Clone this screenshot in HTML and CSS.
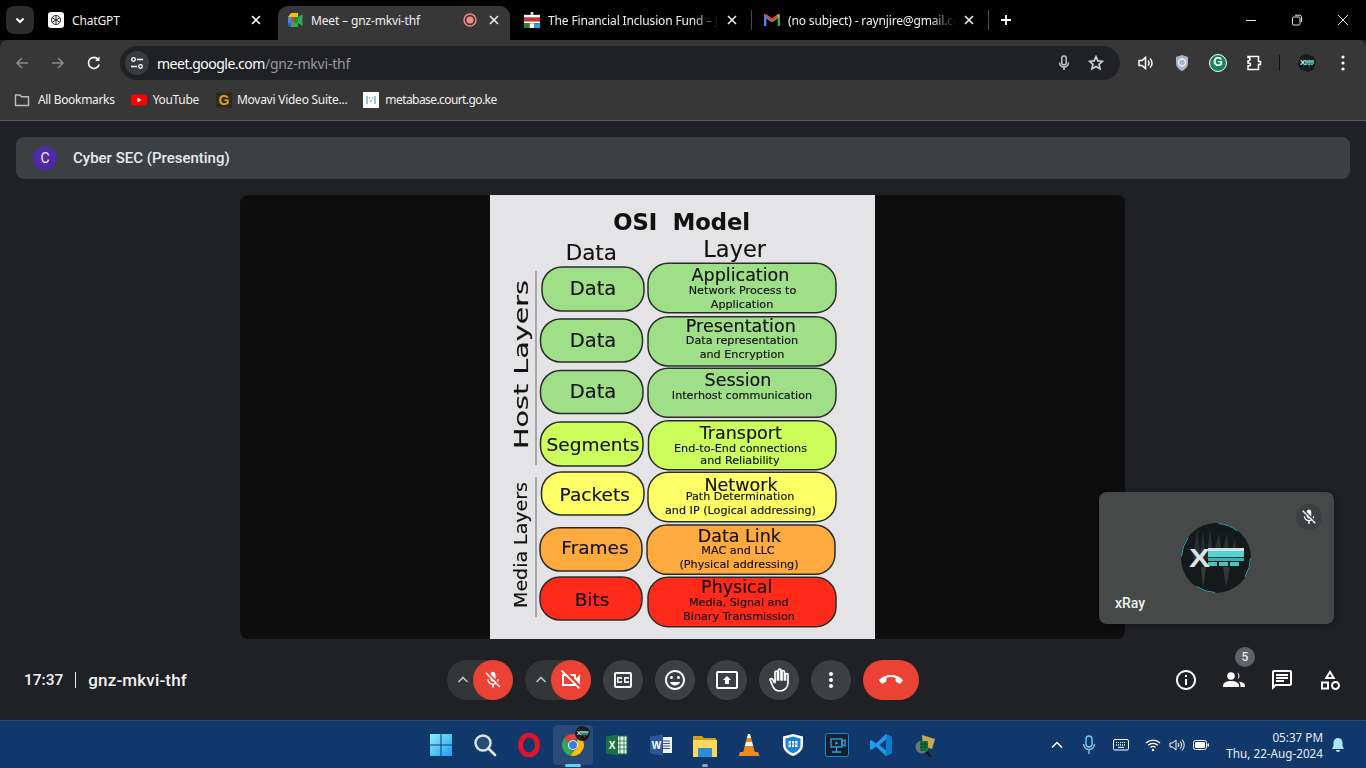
FILE: index.html
```html
<!DOCTYPE html>
<html lang="en">
<head>
<meta charset="utf-8">
<title>Meet – gnz-mkvi-thf</title>
<link rel="stylesheet" href="styles.css">
</head>
<body>
<svg class="defs" aria-hidden="true">
  <symbol id="xray" viewBox="0 0 70 70">
    <clipPath id="xclip"><circle cx="35" cy="35" r="35"/></clipPath>
    <g clip-path="url(#xclip)">
      <rect width="70" height="70" fill="#15191a"/>
      <path d="M16 6l3 26 3-24 3 28 4-30 3 26 6-22 3 20 5-20 3 24 5-18 2 20H12z" fill="#263233"/>
      <path d="M20 44l2 22 3-22zM42 44l3 20 4-20z" fill="#33393a"/>
      <rect x="27" y="25" width="36" height="3" fill="#d8e0e0"/>
      <rect x="27" y="28" width="36" height="6" fill="#4fd4d0"/>
      <rect x="27" y="35" width="36" height="3" fill="#2fb6b2"/>
      <rect x="27" y="39" width="9" height="4" fill="#46c4c0"/>
      <rect x="38" y="39" width="9" height="4" fill="#46c4c0"/>
      <rect x="49" y="39" width="9" height="4" fill="#46c4c0"/>
      <text x="8" y="44" class="x-letter" textLength="21" lengthAdjust="spacingAndGlyphs">X</text>
    </g>
    <circle cx="35" cy="35" r="34.5" fill="none" stroke="#2aa6a6" stroke-width="1" stroke-dasharray="20 35"/>
  </symbol>
  <symbol id="micoff" viewBox="0 0 24 24"><path d="M19 11h-1.7c0 .74-.16 1.43-.43 2.05l1.23 1.23c.56-.98.9-2.09.9-3.28zm-4.02.17c0-.06.02-.11.02-.17V5c0-1.66-1.34-3-3-3S9 3.34 9 5v.18l5.98 5.99zM4.27 3L3 4.27l6.01 6.01V11c0 1.66 1.33 3 2.99 3 .22 0 .44-.03.65-.08l1.66 1.66c-.71.33-1.5.52-2.31.52-2.76 0-5.3-2.1-5.3-5.1H5c0 3.41 2.72 6.23 6 6.72V21h2v-3.28c.91-.13 1.77-.45 2.54-.9L19.73 21 21 19.73 4.27 3z"/></symbol>
</svg>

<header class="tabstrip">
  <div class="tabsearch"><svg class="i12" viewBox="0 0 12 12"><path d="M2.500 4.500L6 8l3.500-3.500" class="st-white2"/></svg></div>
  <div class="tab tab-first">
    <span class="fav fav-white"><svg viewBox="0 0 16 16" class="i14"><circle cx="8" cy="8" r="5.200" class="st-dark"/><path d="M8 3v10M3.600 5.500l8.800 5M12.400 5.500l-8.800 5" class="st-dark"/></svg></span>
    <span class="tabtitle">ChatGPT</span>
    <svg class="tabx" viewBox="0 0 10 10"><path d="M1 1l8 8M9 1l-8 8"/></svg>
  </div>
  <div class="tab tab-active">
    <span class="fav">
      <svg viewBox="0 0 16 16" class="i16"><path d="M4 1h7v4H1z" fill="#fbbc04"/><path d="M1 5h3v6H1z" fill="#4285f4"/><path d="M1 11h3v4H3a2 2 0 0 1-2-2z" fill="#1967d2"/><path d="M4 11h7v4H4z" fill="#34a853"/><path d="M4 5h7v6H4z" fill="#1e8e3e"/><path d="M11 5l4.500-3v12L11 11z" fill="#34a853"/><path d="M4 5h3v6H4z" fill="#ea4335" opacity=".8"/></svg>
    </span>
    <span class="tabtitle">Meet – gnz-mkvi-thf</span>
    <svg class="rec" viewBox="0 0 14 14"><circle cx="7" cy="7" r="6" fill="none" stroke="#f28b82" stroke-width="1.400"/><circle cx="7" cy="7" r="3.600" fill="#f28b82"/></svg>
    <svg class="tabx tabx-near" viewBox="0 0 10 10"><path d="M1 1l8 8M9 1l-8 8"/></svg>
  </div>
  <div class="tab tab-third">
    <span class="fav">
      <svg viewBox="0 0 17 17" class="i16"><rect x="7" y="0" width="3" height="3" fill="#ddd"/><rect x="0" y="3" width="17" height="3" fill="#fff"/><rect x="0" y="6" width="17" height="4" fill="#d32f2f"/><rect x="0" y="10" width="17" height="2" fill="#fff"/><rect x="0" y="12" width="6" height="5" fill="#2e7d32"/><rect x="6" y="12" width="5" height="5" fill="#fff"/><rect x="11" y="12" width="6" height="5" fill="#29a0e0"/></svg>
    </span>
    <span class="tabtitle tabtitle-fade">The Financial Inclusion Fund – JI</span>
    <svg class="tabx" viewBox="0 0 10 10"><path d="M1 1l8 8M9 1l-8 8"/></svg>
  </div>
  <div class="tab tab-gmail">
    <span class="fav">
      <svg viewBox="0 0 16 16" class="i16"><path d="M1.200 14V4l6.800 5.200" fill="none" stroke="#4285f4" stroke-width="2.400"/><path d="M14.800 14V4L8 9.200" fill="none" stroke="#34a853" stroke-width="2.400"/><path d="M1.500 3l6.500 5 6.500-5" fill="none" stroke="#ea4335" stroke-width="2.400"/><path d="M13 3.500l2-1.200V6z" fill="#fbbc04"/></svg>
    </span>
    <span class="tabtitle tabtitle-fade">(no subject) - raynjire@gmail.com</span>
    <svg class="tabx" viewBox="0 0 10 10"><path d="M1 1l8 8M9 1l-8 8"/></svg>
  </div>
  <svg class="newtab" viewBox="0 0 12 12"><path d="M6 1v10M1 6h10"/></svg>
  <div class="winctl">
    <svg viewBox="0 0 12 12"><path d="M1 6.500h10"/></svg>
    <svg viewBox="0 0 12 12"><rect x="1.500" y="3" width="7.500" height="8" rx="1.200"/><path d="M4 1.200h4.500a2 2 0 0 1 2 2V8"/></svg>
    <svg viewBox="0 0 12 12"><path d="M1 1l10 10M11 1L1 11"/></svg>
  </div>
</header>

<section class="chrome">
  <div class="toolbar">
    <svg class="nav nav-dim" viewBox="0 0 16 16"><path d="M14 8H3M8 3L3 8l5 5"/></svg>
    <svg class="nav nav-dim" viewBox="0 0 16 16"><path d="M2 8h11M8 3l5 5-5 5"/></svg>
    <svg class="nav" viewBox="0 0 16 16"><path d="M13.200 9.500A5.500 5.500 0 1 1 12 4.200"/><path class="fill-white" d="M13.500 1.500v4.500H9z"/></svg>
    <div class="omnibox">
      <span class="tune"><svg viewBox="0 0 14 14" class="i14"><path d="M7 3.500h6M1 10.500h6" class="st-white12"/><circle cx="3.500" cy="3.500" r="1.800" class="st-white12"/><circle cx="10.500" cy="10.500" r="1.800" class="st-white12"/></svg></span>
      <span class="url">meet.google.com<span class="url-dim">/gnz-mkvi-thf</span></span>
      <svg class="omni-mic" viewBox="0 0 16 16"><rect x="5.800" y="1" width="4.400" height="9" rx="2.200" class="st-soft"/><path d="M3.500 7.500a4.500 4.500 0 0 0 9 0M8 12v3" class="st-soft"/></svg>
      <svg class="omni-star" viewBox="0 0 16 16"><path d="M8 1.600l1.900 4.300 4.600.4-3.500 3 1.100 4.600L8 11.500l-4.100 2.400L5 9.300l-3.500-3 4.600-.4z" class="st-soft15"/></svg>
    </div>
    <div class="extensions">
      <svg class="ext" viewBox="0 0 18 18"><path d="M2 6.500h3l3.500-3v11l-3.500-3H2z" class="st-white15"/><path d="M11 6.500a3.500 3.500 0 0 1 0 5M13 4.500a6 6 0 0 1 0 9" class="st-white15"/></svg>
      <svg class="ext" viewBox="0 0 18 18"><path d="M9 1l6 2v6c0 4-3 6.500-6 8-3-1.500-6-4-6-8V3z" fill="#aab4c8"/><circle cx="9" cy="8.500" r="3.500" fill="none" stroke="#eef1f6" stroke-width="1.400"/></svg>
      <span class="grammarly">G</span>
      <svg class="ext" viewBox="0 0 18 18"><path d="M3 2.500h10.500v5h2v3h-2v5H3v-3.500c1.500 0 2.500-.6 2.500-1.500S4.500 9 3 9V7c1 0 2-.6 2-2S4 3.500 3 3.500z" class="st-white15"/></svg>
      <span class="toolsep"></span>
      <svg class="ext-avatar"><use href="#xray"/></svg>
      <svg class="ext-more" viewBox="0 0 4 16"><circle cx="2" cy="2" r="1.600"/><circle cx="2" cy="8" r="1.600"/><circle cx="2" cy="14" r="1.600"/></svg>
    </div>
  </div>
  <nav class="bookmarks">
    <a class="bm bm-all"><svg class="i16" viewBox="0 0 16 16"><path d="M1.500 3h4.500l1.500 1.800h7v8.700h-13z" class="st-grey"/></svg>All Bookmarks</a>
    <a class="bm bm-yt"><svg class="i16" viewBox="0 0 16 16"><rect y="2.500" width="16" height="11" rx="3" fill="#f00"/><path d="M6.500 5.500l4 2.500-4 2.500z" fill="#fff"/></svg>YouTube</a>
    <a class="bm bm-mv"><span class="mv-g">G</span>Movavi Video Suite...</a>
    <a class="bm bm-meta"><svg class="i16" viewBox="0 0 16 16"><rect width="16" height="16" fill="#fff"/><path d="M3 4h2v8H3zM11 4h2v8h-2zM6 5h1v2H6zM9 5h1v2H9zM7 8h2v2H7z" fill="#9cc4ea"/></svg>metabase.court.go.ke</a>
  </nav>
</section>

<main class="meet">
  <div class="presenter">
    <span class="presenter-avatar">C</span>
    <span class="presenter-name">Cyber SEC (Presenting)</span>
  </div>
  <div class="stage">
    <svg class="slide" viewBox="0 0 385 444" width="385" height="444">
      <rect width="385" height="444" fill="#e4e4e6"/>
      <text class="s-title" x="191.700" y="35">OSI  Model</text>
      <text class="s-head1" x="101.300" y="65">Data</text>
      <text class="s-head2" x="244.700" y="62">Layer</text>
      <rect class="s-rule" x="45" y="76" width="2" height="194"/>
      <rect class="s-rule" x="45" y="282" width="2" height="140"/>
      <text class="s-host" transform="translate(38 169.500) rotate(-90)" textLength="169" lengthAdjust="spacingAndGlyphs">Host Layers</text>
      <text class="s-media" transform="translate(37 350) rotate(-90)" textLength="126" lengthAdjust="spacingAndGlyphs">Media Layers</text>

      <g class="c-green">
        <rect x="52" y="72" width="102" height="44" rx="20"/>
        <rect x="50.500" y="124" width="102" height="43" rx="20"/>
        <rect x="50.500" y="175.500" width="102.500" height="43" rx="20"/>
        <rect x="158" y="68.300" width="188" height="49.400" rx="20"/>
        <rect x="158" y="121.700" width="188" height="49.300" rx="20"/>
        <rect x="158" y="173.300" width="188" height="49" rx="20"/>
      </g>
      <g class="c-lime">
        <rect x="50.500" y="227" width="102.500" height="44" rx="20"/>
        <rect x="158.500" y="225.700" width="187.500" height="49" rx="20"/>
      </g>
      <g class="c-yellow">
        <rect x="51.500" y="277" width="102.500" height="43" rx="20"/>
        <rect x="158" y="277.300" width="188" height="49.400" rx="20"/>
      </g>
      <g class="c-orange">
        <rect x="50" y="332.700" width="102" height="43.300" rx="20"/>
        <rect x="157" y="330" width="188" height="49.300" rx="20"/>
      </g>
      <g class="c-red">
        <rect x="50" y="382" width="102" height="43" rx="20"/>
        <rect x="158" y="382.300" width="188" height="49.400" rx="20"/>
      </g>

      <text class="s-box" x="103" y="100">Data</text>
      <text class="s-box" x="103" y="151.700">Data</text>
      <text class="s-box" x="103" y="202.700">Data</text>
      <text class="s-box s-box-sm" x="103" y="256">Segments</text>
      <text class="s-box s-box-sm" x="104.700" y="306">Packets</text>
      <text class="s-box s-box-sm" x="105" y="359">Frames</text>
      <text class="s-box s-box-sm" x="102" y="410.700">Bits</text>

      <text class="s-layer" x="250.500" y="86">Application</text>
      <text class="s-sub" x="252.500" y="99.300">Network Process to</text>
      <text class="s-sub" x="252" y="113">Application</text>
      <text class="s-layer" x="250.800" y="137.300">Presentation</text>
      <text class="s-sub" x="252" y="148.700">Data representation</text>
      <text class="s-sub" x="252" y="163.300">and Encryption</text>
      <text class="s-layer" x="248" y="191">Session</text>
      <text class="s-sub" x="252" y="203.700">Interhost communication</text>
      <text class="s-layer" x="250.800" y="244">Transport</text>
      <text class="s-sub" x="250.500" y="256.700">End-to-End connections</text>
      <text class="s-sub" x="250" y="269.300">and Reliability</text>
      <text class="s-layer" x="251" y="296">Network</text>
      <text class="s-sub" x="250" y="305">Path Determination</text>
      <text class="s-sub" x="250.500" y="319.300">and IP (Logical addressing)</text>
      <text class="s-layer" x="249.300" y="347.300">Data Link</text>
      <text class="s-sub" x="248" y="359">MAC and LLC</text>
      <text class="s-sub" x="249" y="373.300">(Physical addressing)</text>
      <text class="s-layer" x="246.700" y="398.300">Physical</text>
      <text class="s-sub" x="248.800" y="410.700">Media, Signal and</text>
      <text class="s-sub" x="249" y="424.700">Binary Transmission</text>
    </svg>
    <div class="selftile">
      <svg class="self-avatar"><use href="#xray"/></svg>
      <span class="self-mute"><svg class="i18 fill-white"><use href="#micoff"/></svg></span>
      <span class="self-name">xRay</span>
    </div>
  </div>

  <div class="controls">
    <div class="ctl-left"><span class="clock">17:37</span><span class="ctl-sep"></span><span class="code">gnz-mkvi-thf</span></div>
    <div class="ctl-center">
      <div class="combo"><svg class="caret" viewBox="0 0 12 12"><path d="M1.500 8L6 3.500 10.500 8"/></svg><span class="cbtn red"><svg class="i20 fill-white"><use href="#micoff"/></svg></span></div>
      <div class="combo"><svg class="caret" viewBox="0 0 12 12"><path d="M1.500 8L6 3.500 10.500 8"/></svg><span class="cbtn red"><svg class="i24 fill-white" viewBox="0 0 24 24"><path d="M3.270 2L2 3.270 4.730 6H4c-.55 0-1 .45-1 1v10c0 .55.45 1 1 1h12c.21 0 .39-.08.55-.18L19.730 21 21 19.730 3.270 2zM5 16V8h1.730l8 8H5zm10-8v2.610l6 6V6.500l-4 4V7c0-.55-.45-1-1-1h-5.610l2 2H15z"/></svg></span></div>
      <span class="cbtn"><svg class="i24 fill-white" viewBox="0 0 24 24"><path d="M19 4H5c-1.110 0-2 .9-2 2v12c0 1.100.89 2 2 2h14c1.100 0 2-.9 2-2V6c0-1.100-.9-2-2-2zm0 14H5V6h14v12zM7 15h3c.55 0 1-.45 1-1v-1H9.500v.5h-2v-3h2v.5H11v-1c0-.55-.45-1-1-1H7c-.55 0-1 .45-1 1v4c0 .55.45 1 1 1zm7 0h3c.55 0 1-.45 1-1v-1h-1.500v.5h-2v-3h2v.5H18v-1c0-.55-.45-1-1-1h-3c-.55 0-1 .45-1 1v4c0 .55.45 1 1 1z"/></svg></span>
      <span class="cbtn"><svg class="i24 fill-white" viewBox="0 0 24 24"><path d="M11.990 2C6.470 2 2 6.480 2 12s4.470 10 9.990 10C17.520 22 22 17.520 22 12S17.520 2 11.990 2zM12 20c-4.420 0-8-3.580-8-8s3.580-8 8-8 8 3.580 8 8-3.580 8-8 8zm3.500-9c.83 0 1.500-.67 1.500-1.500S16.330 8 15.500 8 14 8.670 14 9.500s.67 1.500 1.500 1.500zm-7 0c.83 0 1.500-.67 1.500-1.500S9.330 8 8.500 8 7 8.670 7 9.500 7.670 11 8.500 11zm3.500 6.500c2.330 0 4.310-1.460 5.110-3.500H6.890c.8 2.040 2.780 3.500 5.110 3.500z"/></svg></span>
      <span class="cbtn"><svg class="i24 fill-white" viewBox="0 0 24 24"><path d="M21 3H3c-1.110 0-2 .89-2 2v14c0 1.110.89 2 2 2h18c1.110 0 2-.89 2-2V5c0-1.110-.89-2-2-2zm0 16.020H3V4.980h18v14.040zM10 12H8l4-4 4 4h-2v4h-4v-4z"/></svg></span>
      <span class="cbtn"><svg class="i24 hand" viewBox="0 0 24 24"><path d="M13 23c-3.260 0-6.190-1.990-7.400-5.020l-2.400-6.100c-.3-.8.400-1.500 1.100-1.200l.6.200c.56.180 1.020.61 1.240 1.160L7.250 14.500H8V4.250C8 3.560 8.560 3 9.250 3s1.250.56 1.250 1.250V12h1V2.250C11.500 1.560 12.060 1 12.750 1S14 1.560 14 2.250V12h1V3.750c0-.69.56-1.250 1.250-1.250s1.250.56 1.250 1.250V12h1V6.750c0-.69.56-1.250 1.250-1.250S21 6.060 21 6.750V15c0 4.420-3.580 8-8 8z"/></svg></span>
      <span class="cbtn"><svg class="i24 fill-white" viewBox="0 0 24 24"><circle cx="12" cy="6" r="2"/><circle cx="12" cy="12" r="2"/><circle cx="12" cy="18" r="2"/></svg></span>
      <span class="cbtn hangup"><svg class="i24 fill-white" viewBox="0 0 24 24"><path d="M12 9c-1.600 0-3.150.25-4.600.72v3.100c0 .39-.23.74-.56.9-.98.49-1.870 1.120-2.660 1.850-.18.18-.43.28-.7.28-.28 0-.53-.11-.71-.29L.29 13.080c-.18-.17-.29-.42-.29-.7 0-.28.11-.53.29-.71C3.340 8.780 7.460 7 12 7s8.660 1.780 11.710 4.670c.18.18.29.43.29.71 0 .28-.11.53-.29.71l-2.480 2.480c-.18.18-.43.29-.71.29-.27 0-.52-.11-.7-.28-.79-.74-1.690-1.360-2.670-1.850-.33-.16-.56-.5-.56-.9v-3.100C15.150 9.250 13.600 9 12 9z"/></svg></span>
    </div>
    <div class="ctl-right">
      <span class="rbtn"><svg class="i24 fill-white" viewBox="0 0 24 24"><path d="M11 7h2v2h-2zm0 4h2v6h-2zm1-9C6.480 2 2 6.480 2 12s4.480 10 10 10 10-4.480 10-10S17.520 2 12 2zm0 18c-4.410 0-8-3.590-8-8s3.590-8 8-8 8 3.590 8 8-3.590 8-8 8z"/></svg></span>
      <span class="rbtn"><svg class="i24 fill-white" viewBox="0 0 24 24"><circle cx="9" cy="8" r="3.800"/><path d="M1 19v-1.800C1 14.500 5.500 13 9 13s8 1.500 8 4.200V19z"/><path d="M15 4.400a3.800 3.800 0 0 1 0 7.200 5 5 0 0 0 0-7.200zM18.500 19v-1.800c0-1.500-.8-2.700-2.100-3.600 3 .3 6.600 1.600 6.600 3.600V19z"/></svg><span class="badge">5</span></span>
      <span class="rbtn"><svg class="i24 fill-white" viewBox="0 0 24 24"><path d="M20 2H4c-1.100 0-1.990.9-1.990 2L2 22l4-4h14c1.100 0 2-.9 2-2V4c0-1.100-.9-2-2-2zm0 14H5.170L4 17.170V4h16v12zM6 12h8v2H6zm0-3h12v2H6zm0-3h12v2H6z"/></svg></span>
      <span class="rbtn"><svg class="i24 fill-white" viewBox="0 0 24 24"><path d="M12 2l-5.500 9h11L12 2zm0 3.840L13.930 9h-3.870L12 5.840zM17.500 13c-2.490 0-4.500 2.010-4.500 4.500s2.010 4.500 4.500 4.500 4.500-2.010 4.500-4.500-2.010-4.500-4.500-4.500zm0 7c-1.380 0-2.500-1.120-2.500-2.500s1.120-2.500 2.500-2.500 2.500 1.120 2.500 2.500-1.120 2.500-2.500 2.500zM3 21.500h8v-8H3v8zm2-6h4v4H5v-4z"/></svg></span>
    </div>
  </div>
</main>

<footer class="taskbar">
  <div class="task-spacer"></div>
  <div class="apps">
    <span class="app"><svg class="i24" viewBox="0 0 24 24"><defs><linearGradient id="win" x1="0" y1="0" x2="1" y2="1"><stop offset="0" stop-color="#8ff0fb"/><stop offset="1" stop-color="#1c9ef0"/></linearGradient></defs><path fill="url(#win)" d="M1 1h10.500v10.500H1zM12.500 1H23v10.500H12.500zM1 12.500h10.500V23H1zM12.500 12.500H23V23H12.500z"/></svg></span>
    <span class="app"><svg class="i24" viewBox="0 0 24 24"><circle cx="10" cy="10" r="7.500" fill="#274c7a" stroke="#dfe4ea" stroke-width="2.400"/><path d="M15.500 15.500L22 22" stroke="#dfe4ea" stroke-width="2.600" stroke-linecap="round"/></svg></span>
    <span class="app"><svg class="i24" viewBox="0 0 24 24"><ellipse cx="12" cy="12" rx="8.500" ry="10" fill="none" stroke="#e0142b" stroke-width="5"/></svg></span>
    <span class="app app-active">
      <svg class="i24" viewBox="0 0 24 24"><path d="M12 1a11 11 0 0 1 9.500 5.500H12a5.500 5.500 0 0 0-5 3.300L3.700 4.700A11 11 0 0 1 12 1z" fill="#ea4335"/><path d="M3.700 4.700L8.800 13a4.500 4.500 0 0 0 3.600 4.400L9.300 22.600A11 11 0 0 1 3.700 4.700z" fill="#34a853"/><path d="M21.500 6.500A11 11 0 0 1 9.300 22.600l4.200-5.500a5 5 0 0 0 2.900-6L16 6.500z" fill="#fbbc04"/><circle cx="12" cy="12" r="5" fill="#fff"/><circle cx="12" cy="12" r="4" fill="#3b7de8"/></svg>
      <svg class="app-badge"><use href="#xray"/></svg>
      <span class="run run-active"></span>
    </span>
    <span class="app"><svg class="i24" viewBox="0 0 24 24"><path d="M10 3h12v18H10z" fill="#eaf4ee" stroke="#1e7145" stroke-width="1"/><path d="M15 3v18M19 3v18M10 8h12M10 12h12M10 16h12" stroke="#1e7145" stroke-width=".8"/><path d="M1 3.500L13 1.500v21l-12-2z" fill="#1d6f42"/><text class="tb-letter" x="7" y="16">X</text></svg></span>
    <span class="app"><svg class="i24" viewBox="0 0 24 24"><path d="M10 4h13v16H10z" fill="#f2f5fa"/><path d="M13 8h8M13 10.500h8M13 13h8M13 15.500h8" stroke="#2b579a"/><path d="M1 3.500L14 1.500v21l-13-2z" fill="#2b579a"/><text class="tb-letter" x="7.500" y="16">W</text></svg></span>
    <span class="app"><svg class="i24" viewBox="0 0 24 24"><path d="M0 3h9l2 2h12v4H0z" fill="#d29a1a"/><path d="M0 7h24v17H0z" fill="#fbd75b"/><rect x="5" y="15" width="14" height="9" rx="1" fill="#2a8fd8"/></svg><span class="run"></span></span>
    <span class="app"><svg class="i24" viewBox="0 0 24 24"><path d="M11 1h2l1.200 4h-4.400z" fill="#f5f5f5"/><path d="M9.800 5h4.400l1 4H8.800z" fill="#f08a16"/><path d="M8.800 9h6.400l1 4H7.800z" fill="#f5f5f5"/><path d="M7.800 13h8.400l1.600 6H6.200z" fill="#f08a16"/><path d="M3 19h18l1.500 4h-21z" fill="#ef8c1a"/></svg></span>
    <span class="app"><svg class="i24" viewBox="0 0 24 24"><path d="M12 1l10 2.500V12c0 5.500-4.500 9-10 11C6.500 21 2 17.500 2 12V3.500z" fill="#fff"/><path d="M12 3.500l7.500 2V12c0 4-3.300 6.700-7.500 8.300C7.800 18.700 4.500 16 4.500 12V5.500z" fill="#1783d6"/><path d="M7.500 8h9v6h-9z" fill="#fff"/><path d="M7.500 11h9M10.500 8v6M13.500 8v6" stroke="#1783d6"/></svg></span>
    <span class="app"><svg class="i24" viewBox="0 0 24 24"><rect x=".5" y=".5" width="23" height="23" rx="2" fill="#14202e" stroke="#1a86d0"/><rect x="6" y="6" width="11" height="8" fill="none" stroke="#2ea6f0" stroke-width="1.300"/><path d="M10.500 8.200v3.600l3-1.800z" fill="#2ea6f0"/><path d="M17 8.500l3-1.500v6l-3-1.500zM11.500 14v4M7 19h9" stroke="#2ea6f0" stroke-width="1.300" fill="none"/></svg></span>
    <span class="app"><svg class="i24" viewBox="0 0 24 24"><path d="M17 1l6 3v16l-6 3L7 13.500 2.500 17 1 16V8l1.500-1L7 10.500z" fill="#1f9cf0"/><path d="M17 6.500L10.500 12l6.500 5.500z" fill="#0e3a6e"/><path d="M17 1l6 3v16l-6 3z" fill="#0e7ccb"/></svg></span>
    <span class="app"><svg class="i24" viewBox="0 0 24 24"><circle cx="9" cy="14" r="6.500" fill="#6c7479"/><path d="M9 2l13 4-3 10-9-3z" fill="#c9a94d"/><rect x="7" y="8" width="8" height="10" fill="#11823b"/><path d="M9 8v10M12 8v10M7 11h8M7 14h8" stroke="#0b2f1a" stroke-width=".7"/><path d="M13 19l5 5" stroke="#111" stroke-width="2"/></svg></span>
  </div>
  <div class="tray">
    <span class="t32"><svg class="i14" viewBox="0 0 14 14"><path d="M2 9.500L7 4.500l5 5" class="st-white15"/></svg></span>
    <span class="t32"><svg class="i16x" viewBox="0 0 16 20"><rect x="5" y="1" width="6" height="11" rx="3" class="st-blue"/><path d="M2.500 9a5.500 5.500 0 0 0 11 0M8 14.500V19" class="st-blue"/></svg></span>
    <span class="t32 t32-last"><svg class="kbd" viewBox="0 0 16 12"><rect x=".5" y=".5" width="15" height="10.500" rx="1.500" class="st-white1"/><path d="M3 3.500h10M3 5.800h10" class="st-dots"/><path d="M5 8.300h6" class="st-white1"/></svg></span>
    <span class="t24"><svg class="i16" viewBox="0 0 16 14"><path d="M1 5a10 10 0 0 1 14 0M3.200 7.300a7 7 0 0 1 9.600 0M5.400 9.500a4 4 0 0 1 5.200 0" class="st-white12"/><circle cx="8" cy="12" r="1.200" fill="#fff"/></svg></span>
    <span class="t24"><svg class="i16" viewBox="0 0 16 16"><path d="M1 6v4h2.500L7 13V3L3.500 6z" class="st-white1"/><path d="M9 6a3 3 0 0 1 0 4M11 4.200a5.500 5.500 0 0 1 0 7.600M13 2.500a8 8 0 0 1 0 11" class="st-white1"/></svg></span>
    <span class="t24"><svg class="i16" viewBox="0 0 16 12"><rect x=".5" y="1.500" width="13" height="9" rx="2" class="st-white1"/><rect x="2" y="3" width="10" height="6" rx="1" fill="#fff"/><rect x="14.500" y="4.500" width="1.500" height="3" fill="#fff"/></svg></span>
    <div class="datetime"><span>05:37 PM</span><span>Thu, 22-Aug-2024</span></div>
    <span class="t24"><svg class="i16" viewBox="0 0 16 16"><path d="M8 1a4.500 4.500 0 0 1 4.500 4.500V9L14 12H2l1.500-3V5.500A4.500 4.500 0 0 1 8 1z" fill="#a6e8fb"/><path d="M6 13h4a2 2 0 0 1-4 0z" fill="#a6e8fb"/></svg></span>
  </div>
</footer>
</body>
</html>
```

FILE: styles.css
```css
* { box-sizing: border-box; }
html, body { margin: 0; padding: 0; }
body {
  width: 1366px;
  height: 768px;
  overflow: hidden;
  display: flex;
  flex-direction: column;
  background: #202124;
  color: #fff;
  font-family: "Noto Sans", "Open Sans", sans-serif;
}
svg { display: block; flex: none; }
.defs { position: absolute; width: 0; height: 0; }
.i12 { width: 12px; height: 12px; }
.i14 { width: 14px; height: 14px; }
.i16 { width: 16px; height: 16px; }
.i18 { width: 18px; height: 18px; }
.i20 { width: 20px; height: 20px; }
.i24 { width: 24px; height: 24px; }
.i16x { width: 16px; height: 20px; }
.fill-white { fill: #fff; }
.st-white1, .st-white12, .st-white15, .st-white2, .st-dark, .st-soft, .st-soft15, .st-grey, .st-blue, .st-dots { fill: none; }
.st-white1 { stroke: #fff; stroke-width: 1; }
.st-white12 { stroke: #fff; stroke-width: 1.3; }
.st-white15 { stroke: #fff; stroke-width: 1.5; }
.st-white2 { stroke: #fff; stroke-width: 2; }
.st-dark { stroke: #222; stroke-width: 1.1; }
.st-soft { stroke: #c4c7c5; stroke-width: 1.5; }
.st-soft15 { stroke: #d4d6d5; stroke-width: 1.6; }
.st-grey { stroke: #bdbdbd; stroke-width: 1.4; }
.st-blue { stroke: #7cc8ec; stroke-width: 1.4; }
.st-dots { stroke: #fff; stroke-width: 1.2; stroke-dasharray: 1 1; }
.x-letter { font: 700 26px "Liberation Sans", sans-serif; fill: #dfe3e3; }

/* tab strip */
.tabstrip {
  height: 40px;
  flex: none;
  background: #000;
  display: flex;
  align-items: flex-end;
  padding-left: 6px;
  font-size: 12px;
}
.tabsearch {
  width: 28px;
  height: 28px;
  margin-bottom: 6px;
  border-radius: 8px;
  background: #2c2c2c;
  display: flex;
  align-items: center;
  justify-content: center;
}
.tab {
  height: 34px;
  width: 238px;
  display: flex;
  align-items: center;
  padding: 0 0 6px 14px;
  color: #f1f1f1;
  letter-spacing: -.15px;
}
.tab-first { width: 244px; }
.tab-active {
  width: 232px;
  padding-left: 9px;
  background: #373737;
  border-radius: 10px 10px 0 0;
}
.tab-third { width: 241px; }
.tab-gmail { width: 238px; padding: 0 0 0 12px; border-left: 1px solid #4a4a4a; border-right: 1px solid #4a4a4a; height: 20px; margin-bottom: 10px; }
.fav { width: 16px; height: 16px; margin-right: 8px; flex: none; display: flex; align-items: center; justify-content: center; }
.fav-white { background: #fff; border-radius: 3px; }
.tabtitle { flex: 1; white-space: nowrap; overflow: hidden; min-width: 0; }
.tabtitle-fade { -webkit-mask-image: linear-gradient(to right, #000 85%, transparent 100%); mask-image: linear-gradient(to right, #000 85%, transparent 100%); }
.tabx { width: 10px; height: 10px; margin: 0 17px 0 8px; fill: none; stroke: #eee; stroke-width: 1.6; }
.tabx-near { margin: 0 11px 0 12px; }
.tab-third .tabx { margin: 0 14px 0 8px; }
.tab-gmail .tabx { margin: 0 14px 0 8px; }
.rec { width: 14px; height: 14px; }
.newtab { width: 12px; height: 12px; margin: 0 0 14px 11px; fill: none; stroke: #fff; stroke-width: 1.8; }
.winctl { margin-left: auto; height: 40px; align-self: flex-start; display: flex; align-items: center; gap: 34px; padding: 0 17px 0 0; }
.winctl svg { width: 12px; height: 12px; fill: none; stroke: #e8e8e8; stroke-width: 1; }

/* toolbar */
.chrome {
  flex: none;
  height: 81px;
  background: #373737;
  border-bottom: 1px solid #5c5c5c;
  border-radius: 8px 8px 0 0;
}
.toolbar { height: 40px; display: flex; align-items: center; padding: 6px 0 0 14px; }
.nav { width: 16px; height: 16px; margin-right: 20px; fill: none; stroke: #fff; stroke-width: 1.6; }
.nav-dim { stroke: #8a8a8a; }
.toolbar .fill-white { stroke: none; }
.omnibox {
  width: 1000px;
  height: 34px;
  margin-left: -2px;
  background: #202124;
  border-radius: 17px;
  display: flex;
  align-items: center;
  padding-left: 5px;
}
.tune { width: 24px; height: 24px; border-radius: 50%; background: #3a3b3d; display: flex; align-items: center; justify-content: center; }
.url { margin-left: 8px; font-size: 14px; letter-spacing: -.5px; color: #fff; flex: 1; }
.url-dim { color: #9a9a9a; letter-spacing: -.2px; }
.omni-mic { width: 16px; height: 16px; margin-right: 16px; }
.omni-star { width: 16px; height: 16px; margin-right: 16px; }
.extensions { display: flex; align-items: center; padding-left: 17px; }
.ext { width: 18px; height: 18px; margin-right: 18px; }
.grammarly { width: 18px; height: 18px; margin-right: 18px; border-radius: 50%; border: 1.5px solid #fff; background: #15845f; color: #fff; font: 700 12px/15px "Liberation Sans", sans-serif; text-align: center; }
.toolsep { width: 1px; height: 16px; background: #0f0f0f; margin-left: -2px; }
.ext-avatar { width: 18px; height: 18px; margin-left: 18px; }
.ext-more { width: 4px; height: 16px; margin-left: 25px; fill: #fff; }

/* bookmarks */
.bookmarks { height: 39px; display: flex; align-items: center; padding-left: 14px; font-size: 12px; letter-spacing: -.32px; color: #f1f1f1; }
.bm { display: flex; align-items: center; gap: 6px; margin-right: 16px; white-space: nowrap; }
.bm-all { gap: 8px; }
.bm-yt { margin-right: 17px; }
.bm-mv { gap: 5px; letter-spacing: -.25px; }
.bm-meta { letter-spacing: -.58px; }
.mv-g { width: 16px; height: 16px; background: #2e2a1e; color: #d9a21b; font: 700 14px/16px "Liberation Sans", sans-serif; text-align: center; }

/* meet */
.meet { flex: 1; min-height: 0; background: #202124; display: flex; flex-direction: column; font-family: Roboto, "Noto Sans", sans-serif; }
.presenter {
  height: 42px;
  margin: 16px 16px 0;
  background: #3c4043;
  border-radius: 8px;
  display: flex;
  align-items: center;
  padding-left: 17px;
  flex: none;
}
.presenter-avatar { width: 24px; height: 24px; border-radius: 50%; background: #4e2aa8; text-align: center; font-size: 14px; line-height: 24px; color: #eee; }
.presenter-name { margin-left: 16px; font-size: 15px; font-weight: 500; color: #e8eaed; }
.stage {
  position: relative;
  width: 885px;
  height: 444px;
  margin: 16px 0 0 240px;
  background: #0d0d0d;
  border-radius: 8px;
  display: flex;
  justify-content: center;
  flex: none;
}
.slide { filter: blur(.35px); }
.slide text { font-family: "DejaVu Sans", sans-serif; text-anchor: middle; fill: #111; white-space: pre; stroke: #111; stroke-width: .15px; }
.s-title { font-size: 22.6px; font-weight: 700; }
.s-head1 { font-size: 21.5px; }
.s-head2 { font-size: 22.5px; }
.s-host { font-size: 19px; }
.s-media { font-size: 17.5px; }
.s-rule { fill: #a8a8a8; }
.s-box { font-size: 19.5px; }
.s-box-sm { font-size: 18.5px; }
.s-layer { font-size: 17.5px; }
.s-sub { font-size: 11.2px; }
.c-green rect, .c-lime rect, .c-yellow rect, .c-orange rect, .c-red rect { stroke: #2b2b2b; stroke-width: 1.5; }
.c-green { fill: #9fdf87; }
.c-lime { fill: #ccff5c; }
.c-yellow { fill: #ffff66; }
.c-orange { fill: #ffaa3f; }
.c-red { fill: #ff2a1a; }

.selftile {
  position: absolute;
  left: 859px;
  top: 297px;
  width: 235px;
  height: 132px;
  background: #474948;
  border-radius: 8px;
  box-shadow: 0 1px 6px rgba(0,0,0,.3);
}
.self-avatar { position: absolute; left: 82px; top: 31px; width: 70px; height: 70px; }
.self-mute { position: absolute; right: 12px; top: 12px; width: 26px; height: 26px; border-radius: 50%; background: #3c4043; display: flex; align-items: center; justify-content: center; }
.self-name { position: absolute; left: 16px; bottom: 13px; font-size: 14px; font-weight: 500; color: #f1f3f4; }

.controls { flex: 1; display: flex; align-items: center; position: relative; padding-top: 1px; }
.ctl-left { width: 447px; padding-left: 24px; display: flex; align-items: center; font-size: 16px; font-weight: 500; color: #f1f3f4; }
.clock { font-size: 15.5px; }
.code { font-size: 17px; letter-spacing: .15px; }
.ctl-sep { width: 1px; height: 16px; background: #e8eaed; margin: 0 12px; }
.ctl-center { display: flex; align-items: center; gap: 12px; }
.combo { width: 66px; height: 40px; background: #333537; border-radius: 20px; display: flex; align-items: center; justify-content: space-between; padding-left: 10px; }
.caret { width: 12px; height: 12px; fill: none; stroke: #bdc1c6; stroke-width: 1.6; }
.cbtn { width: 40px; height: 40px; border-radius: 50%; background: #3c4043; display: flex; align-items: center; justify-content: center; }
.red { background: #ea4335; }
.hangup { width: 56px; border-radius: 20px; background: #ea4335; }
.hand { fill: none; stroke: #fff; stroke-width: 1.7; }
.ctl-right { margin-left: auto; display: flex; padding-right: 12px; }
.rbtn { width: 48px; height: 40px; display: flex; align-items: center; justify-content: center; position: relative; }
.badge { position: absolute; left: 25px; top: -13px; width: 20px; height: 20px; border-radius: 50%; background: #5f6368; font-size: 12px; font-weight: 500; line-height: 20px; text-align: center; color: #e8eaed; }

/* taskbar */
.taskbar {
  flex: none;
  height: 48px;
  background: #11386b;
  border-top: 1px solid #2a4a74;
  display: grid;
  grid-template-columns: 1fr auto 1fr;
  align-items: center;
  font-family: "Noto Sans", sans-serif;
}
.apps { display: flex; }
.app { width: 44px; height: 40px; display: flex; align-items: center; justify-content: center; position: relative; border-radius: 4px; }
.app-active { background: #2a4b78; width: 40px; margin: 0 2px; }
.app-badge { position: absolute; right: 3px; top: 1px; width: 15px; height: 15px; }
.run { position: absolute; left: 19px; bottom: -2px; width: 6px; height: 3px; border-radius: 2px; background: #8fa3bb; }
.run-active { left: 12px; width: 16px; background: #60cdff; }
.tb-letter { font: 700 10px "Liberation Sans", sans-serif; fill: #fff; text-anchor: middle; }
.tray { display: flex; align-items: center; justify-content: flex-end; padding-right: 16px; }
.t32 { width: 32px; display: flex; justify-content: center; }
.t32-last { margin-right: 4px; }
.t24 { width: 24px; display: flex; justify-content: center; }
.kbd { width: 16px; height: 12px; }
.datetime { width: 110px; margin-right: 3px; display: flex; flex-direction: column; align-items: flex-end; font-size: 11.7px; line-height: 16px; color: #e8eef5; }
```
